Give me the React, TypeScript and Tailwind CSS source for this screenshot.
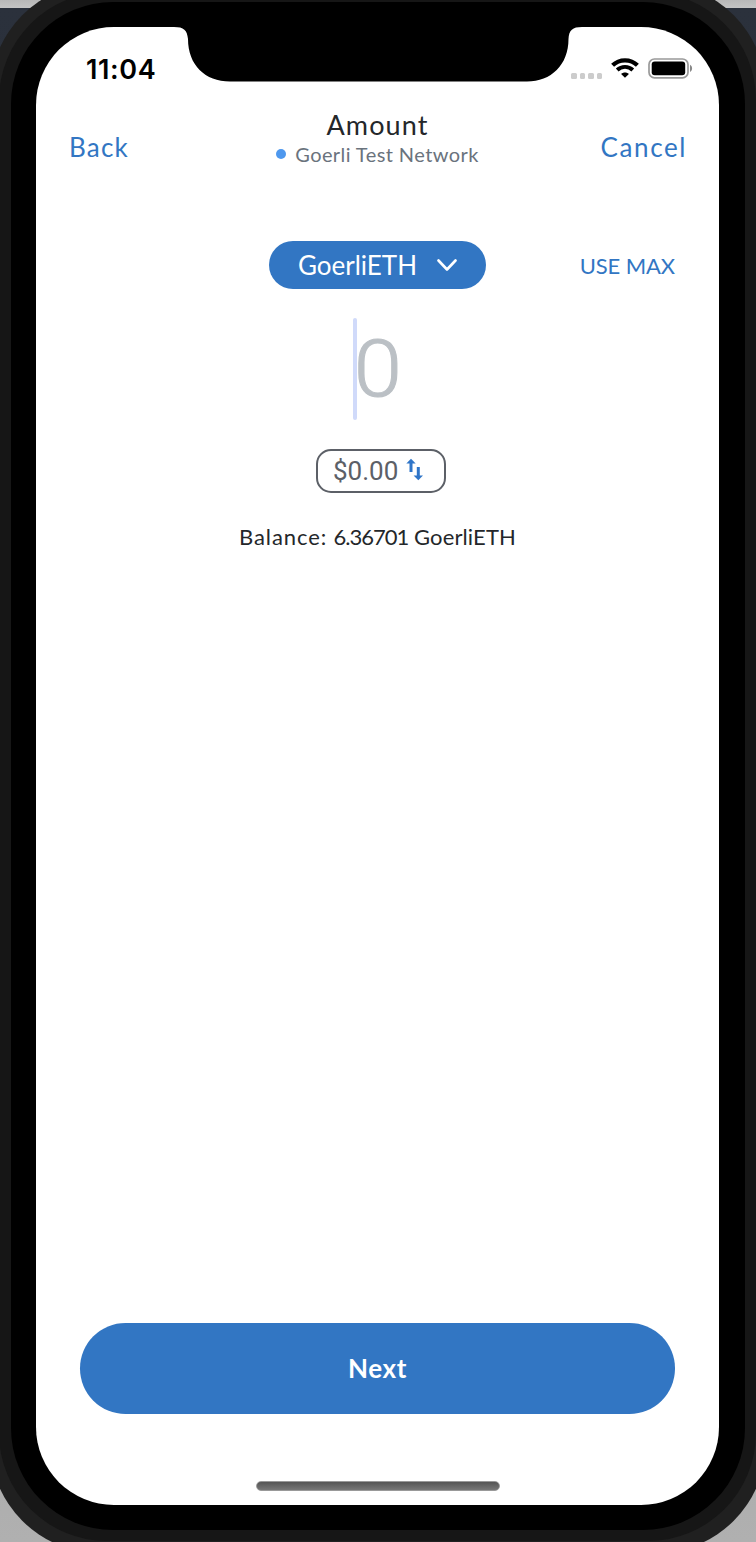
function Notch() {
  return (
    <svg
      className="absolute left-[138px] top-0"
      width="408"
      height="55"
      viewBox="0 0 408 55"
      fill="#000"
      aria-hidden="true"
    >
      <path d="M0 0H408C398.500 0 395 3 394.500 12C394.500 38 377 54.500 353 54.500H56C31 54.500 14 38 14 12C13 3 10 0 0 0Z" />
    </svg>
  );
}

function WifiIcon() {
  return (
    <svg width="28" height="20" viewBox="0 0 28 20" fill="none" stroke="#000" aria-hidden="true">
      <path d="M1.600 7.300C8.400 0.600 19.600 0.600 26.400 7.300" strokeWidth="4.200" />
      <path d="M6.200 12C10.500 7.800 17.500 7.800 21.800 12" strokeWidth="3.900" />
      <path d="M10.100 15.900C12.300 13.900 15.700 13.900 17.900 15.900L14 19.800Z" fill="#000" stroke="none" />
    </svg>
  );
}

function BatteryIcon() {
  return (
    <svg width="45" height="21" viewBox="0 0 45 21" fill="none" aria-hidden="true">
      <rect x="1" y="1" width="39" height="18.800" rx="5.500" stroke="#999" strokeWidth="1.700" />
      <rect x="3.700" y="3.500" width="33.500" height="13.800" rx="3" fill="#000" />
      <path d="M42 6.800C44.800 8.200 44.800 12.600 42 14Z" fill="#888" />
    </svg>
  );
}

function SwapIcon() {
  return (
    <svg width="18" height="23" viewBox="0 0 18 23" fill="none" stroke="#2f75c8" strokeWidth="3" aria-hidden="true">
      <path d="M5 14V3" />
      <path d="M0.300 5.500L5 0.800L9.700 5.500Z" fill="#2f75c8" stroke="none" />
      <path d="M12.300 9V20" />
      <path d="M7.600 17.500L12.300 22.200L17 17.500Z" fill="#2f75c8" stroke="none" />
    </svg>
  );
}

function StatusBar() {
  return (
    <div className="flex h-[70px] items-start justify-between pl-[50px] pr-[26px]">
      <span className="mt-[26px] font-['Inter',sans-serif] text-[27px] font-semibold leading-[34px] tracking-[0.6px] text-black">
        11:04
      </span>
      <div className="mt-[31px] flex items-start">
        <div className="mr-[9px] mt-[15px] flex gap-[3px]">
          <i className="size-[5.5px] rounded-[1.5px] bg-[#ccc]" />
          <i className="size-[5.5px] rounded-[1.5px] bg-[#ccc]" />
          <i className="size-[5.5px] rounded-[1.5px] bg-[#ccc]" />
          <i className="size-[5.5px] rounded-[1.5px] bg-[#ccc]" />
        </div>
        <WifiIcon />
        <div className="ml-[9px]">
          <BatteryIcon />
        </div>
      </div>
    </div>
  );
}

function Header() {
  return (
    <header className="grid h-[95px] grid-cols-[1fr_auto_1fr] items-start px-[33px]">
      <button className="mt-[33px] justify-self-start text-[26px] leading-[34px] tracking-[1.2px] text-[#3276c3]">
        Back
      </button>
      <div className="flex flex-col items-center">
        <h1 className="mt-[11px] text-[27px] leading-[34px] tracking-[1.1px] text-[#24272a]">Amount</h1>
        <p className="-mt-px flex items-center whitespace-nowrap text-[20px] leading-[26px] tracking-[0.42px] text-[#6a737d]">
          <i className="mr-[9px] size-[10px] rounded-full bg-[#4e98ee]" />
          Goerli Test Network
        </p>
      </div>
      <button className="-mr-px mt-[33px] justify-self-end text-[26px] leading-[34px] tracking-[1.6px] text-[#3276c3]">
        Cancel
      </button>
    </header>
  );
}

function AmountForm() {
  return (
    <main className="flex flex-1 flex-col items-center">
      <div className="mt-[49px] grid w-full grid-cols-[1fr_auto_1fr] items-center pr-[44px] pl-[44px]">
        <span />
        <button className="flex h-[48px] w-[217px] items-center justify-center gap-[20px] rounded-full bg-[#3276c3] text-[26px] text-white">
          GoerliETH
          <svg width="20" height="13" viewBox="0 0 20 13" fill="none" stroke="#fff" strokeWidth="2.600" strokeLinecap="round" strokeLinejoin="round" aria-hidden="true">
            <path d="M1.500 1.500L10 10.500L18.500 1.500" />
          </svg>
        </button>
        <button className="justify-self-end whitespace-nowrap text-[22px] tracking-[-0.1px] text-[#3276c3]">USE MAX</button>
      </div>
      <div className="-ml-[2px] mt-[29px] flex h-[102px] items-center">
        <i className="h-[102px] w-[4px] rounded-full bg-[#d0dafa]" />
        <span className="-ml-px scale-x-110 font-['Roboto',sans-serif] text-[79px] font-light leading-[102px] text-[#bbc0c5] [-webkit-text-stroke:1px_#bbc0c5]">
          0
        </span>
      </div>
      <button className="ml-[7px] mt-[29px] flex h-[44px] w-[130px] items-center rounded-[15px] border-2 border-[#5c6067] pl-[15px] text-[#5c6067]">
        <span className="font-['Roboto',sans-serif] text-[26px] font-normal leading-[40px]">$0.00</span>
        <span className="-mt-[4px] ml-[8px]">
          <SwapIcon />
        </span>
      </button>
      <p className="mt-[29px] whitespace-nowrap text-[22px] leading-[30px] text-[#24272a]">
        <span className="tracking-[0.9px]">Balance: </span>
        <span className="tracking-[-1px]">6.36701 </span>
        <span className="ml-px tracking-[0.12px]">GoerliETH</span>
      </p>
    </main>
  );
}

export default function App() {
  return (
    <div className="h-[1542px] w-[756px] overflow-hidden bg-[linear-gradient(#b8b8b8_0,#c4c4c4_8px,#2b313c_8px,#232a35_700px,#a5a5a5_1200px,#b0b0b0_1542px)]">
      <div className="-mx-[10px] -mt-[17px] h-[1570px] w-[776px] rounded-[110px] bg-[#202020] px-[9px] pt-[9px]">
        <div className="h-[1549px] w-[757px] rounded-[108px] bg-[#161616] pl-[11.5px] pt-[10px]">
          <div className="h-[1528px] w-[734px] rounded-[102px] bg-black pl-[25.5px] pt-[25px]">
            <div className="relative flex h-[1478px] w-[683px] flex-col overflow-hidden rounded-[78px] bg-white font-['Lato',sans-serif]">
              <Notch />
              <StatusBar />
              <Header />
              <AmountForm />
              <footer className="flex flex-col items-center">
                <button className="h-[91px] w-[595px] rounded-full bg-[#3276c3] text-[26px] font-bold tracking-[0.6px] text-white">
                  Next
                </button>
                <i className="mb-[14px] mt-[67px] h-[10px] w-[244px] rounded-full border border-[#999] bg-linear-to-b from-[#555] to-[#777]" />
              </footer>
            </div>
          </div>
        </div>
      </div>
    </div>
  );
}
